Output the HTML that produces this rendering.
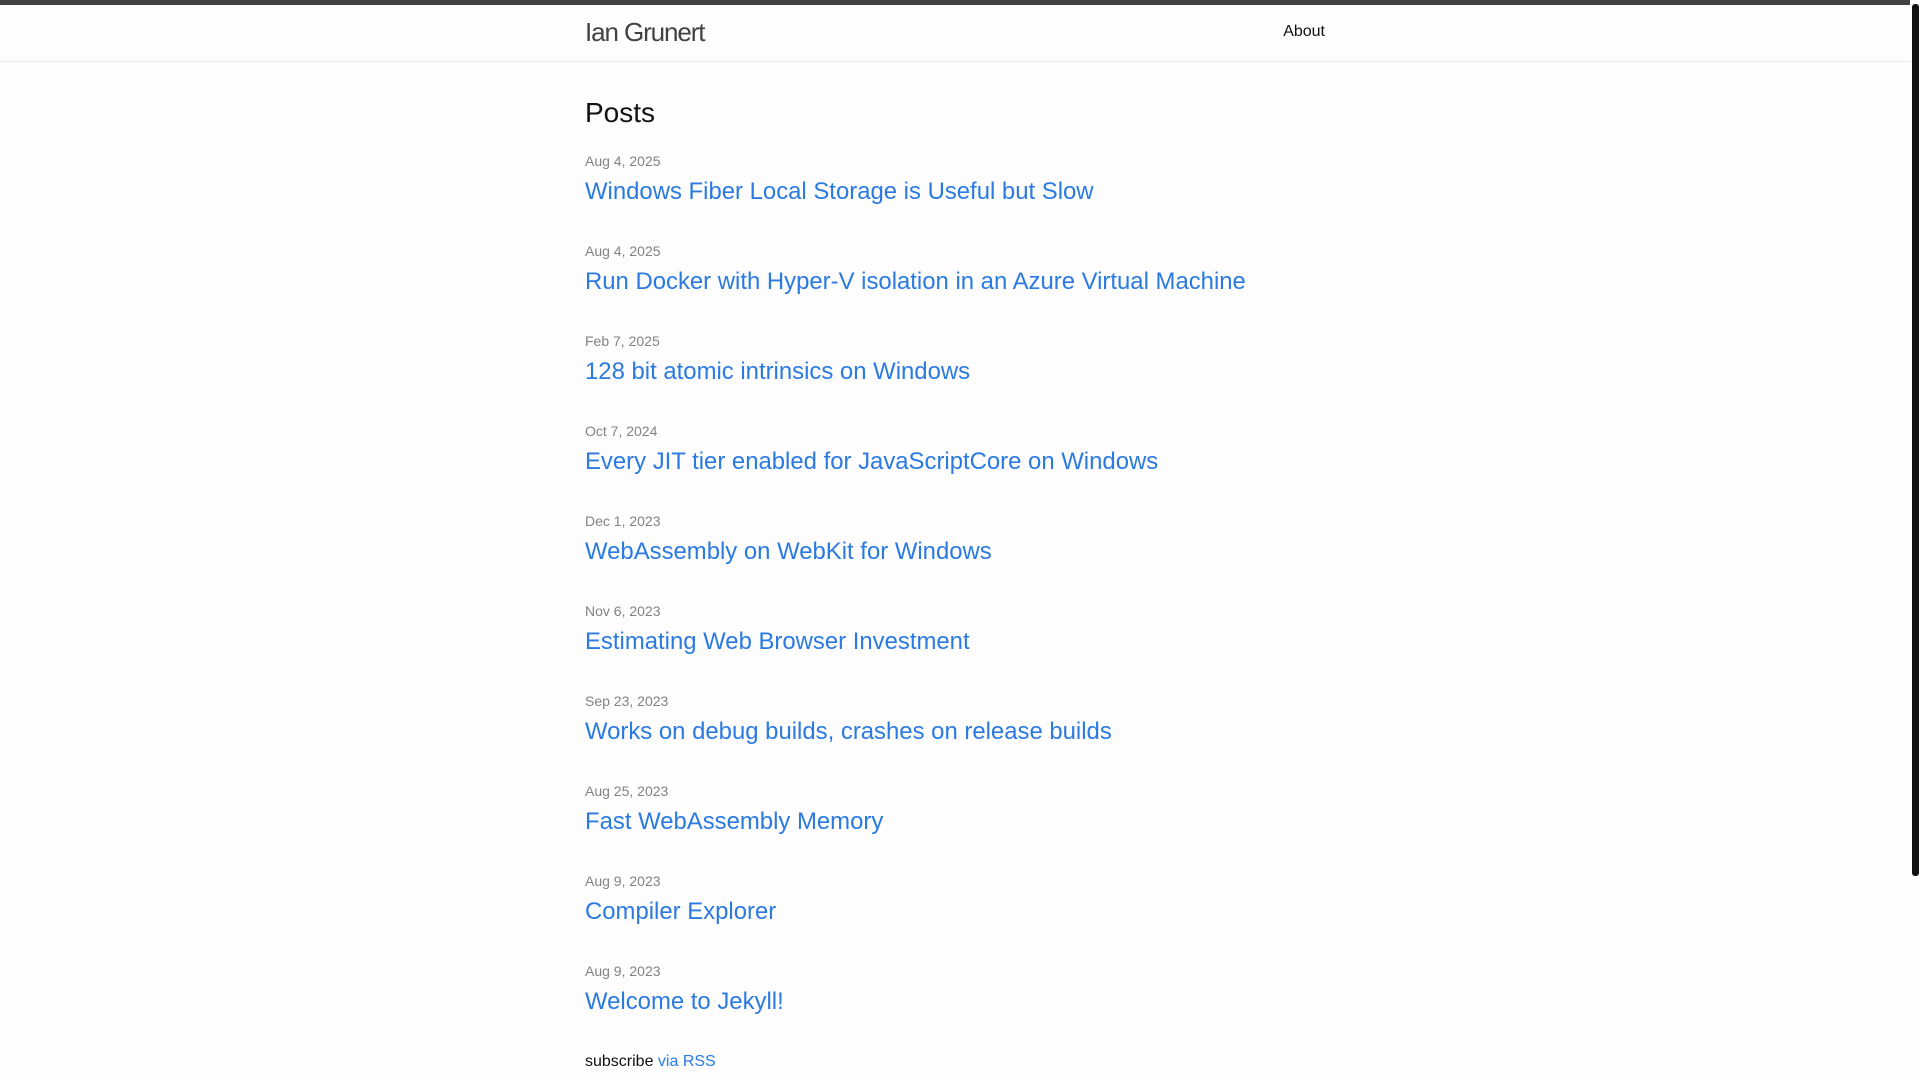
<!DOCTYPE html>
<html><head><meta charset="utf-8"><style>
*{margin:0;padding:0;box-sizing:border-box}
html,body{width:1920px;height:1080px;overflow:hidden;background:#fdfdfd;font-family:"Liberation Sans",Helvetica,Arial,sans-serif;color:#111}
.topbar{position:absolute;left:0;top:0;width:1910px;height:5px;background:#424242}
.header{position:absolute;left:0;top:5px;width:1910px;height:57px;border-bottom:1px solid #e8e8e8}
.title{position:absolute;left:585px;top:0;line-height:54px;font-size:26px;letter-spacing:-1.1px;color:#424242}
.about{position:absolute;right:585px;top:0;line-height:54px;font-size:16px;color:#111}
.abs{position:absolute;left:585px;white-space:nowrap}
.h{font-size:28px;line-height:42px;top:92px}
.meta{font-size:14px;line-height:21px;color:#828282}
.link{font-size:23.9px;line-height:36px;color:#2a7ae2;margin-top:2px}
.m{margin-top:1px}
.sb{position:absolute;left:1910px;top:0;width:10px;height:1080px;background:#fdfdfd}
.thumb{position:absolute;left:1912px;top:4px;width:7px;height:872px;background:#111;border-radius:3px}
</style></head><body>
<div class="topbar"></div>
<div class="header"><div class="title">Ian Grunert</div><div class="about">About</div></div>
<div class="abs h">Posts</div>
<div class="abs meta m" style="top:150px">Aug 4, 2025</div><div class="abs link" style="top:172px">Windows Fiber Local Storage is Useful but Slow</div>
<div class="abs meta m" style="top:240px">Aug 4, 2025</div><div class="abs link" style="top:262px">Run Docker with Hyper-V isolation in an Azure Virtual Machine</div>
<div class="abs meta m" style="top:330px">Feb 7, 2025</div><div class="abs link" style="top:352px">128 bit atomic intrinsics on Windows</div>
<div class="abs meta m" style="top:420px">Oct 7, 2024</div><div class="abs link" style="top:442px">Every JIT tier enabled for JavaScriptCore on Windows</div>
<div class="abs meta m" style="top:510px">Dec 1, 2023</div><div class="abs link" style="top:532px">WebAssembly on WebKit for Windows</div>
<div class="abs meta m" style="top:600px">Nov 6, 2023</div><div class="abs link" style="top:622px">Estimating Web Browser Investment</div>
<div class="abs meta m" style="top:690px">Sep 23, 2023</div><div class="abs link" style="top:712px">Works on debug builds, crashes on release builds</div>
<div class="abs meta m" style="top:780px">Aug 25, 2023</div><div class="abs link" style="top:802px">Fast WebAssembly Memory</div>
<div class="abs meta m" style="top:870px">Aug 9, 2023</div><div class="abs link" style="top:892px">Compiler Explorer</div>
<div class="abs meta m" style="top:960px">Aug 9, 2023</div><div class="abs link" style="top:982px">Welcome to Jekyll!</div>
<div class="abs" style="top:1050px;font-size:16px;line-height:24px">subscribe <span style="color:#2a7ae2">via RSS</span></div>
<div class="sb"></div><div class="thumb"></div>
</body></html>
